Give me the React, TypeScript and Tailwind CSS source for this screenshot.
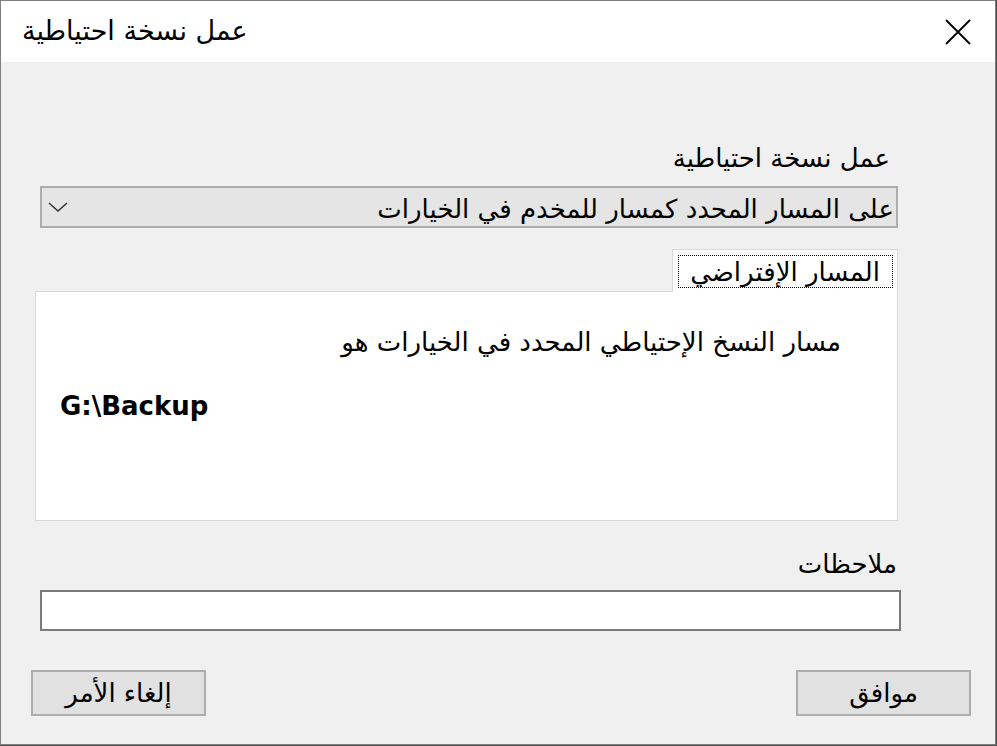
export default function App() {
  const font = { fontFamily: '"DejaVu Sans", "Liberation Sans", sans-serif' };

  return (
    <div className="w-[997px] h-[746px] bg-[#4a4a4a]" style={font}>
      <div className="w-[996px] h-[745px] border border-[#7f7f7f] bg-[#f0f0f0] flex flex-col">
        {/* Title bar */}
        <div className="h-[61px] bg-white flex items-center justify-between pl-[21px] pr-[24px]">
          <span dir="rtl" className="text-[27px] text-black leading-[30px] pb-[1px]">
            عمل نسخة احتياطية
          </span>
          <svg width="26" height="26" viewBox="0 0 26 26" className="text-black">
            <path d="M1 1 L25 25 M25 1 L1 25" stroke="currentColor" strokeWidth="1.8" fill="none" />
          </svg>
        </div>

        {/* Body */}
        <div dir="rtl" className="flex-1 flex flex-col">
          <div className="mt-[84px] mr-[105px] text-[26px] leading-[24px] text-black">
            عمل نسخة احتياطية
          </div>

          {/* Dropdown */}
          <div className="mt-[16px] mr-[97px] w-[858px] h-[42px] bg-[#e5e5e5] border-2 border-[#adadad] flex items-center justify-between pr-[2px] pl-[6px]">
            <span className="text-[26px] leading-[30px] pt-[4px] text-black">على المسار المحدد كمسار للمخدم في الخيارات</span>
            <svg width="20" height="10" viewBox="0 0 20 10">
              <path d="M1 1 L10 9 L19 1" stroke="#333" strokeWidth="1.5" fill="none" />
            </svg>
          </div>

          {/* Tabs */}
          <div className="mt-[21px] mr-[97px] w-[863px] flex flex-col">
            <div className="w-[226px] h-[43px] bg-white border border-b-0 border-[#d9d9d9] -mb-[1px] relative z-10 flex items-start justify-center pt-[5px]">
              <div className="w-[215px] h-[33px] border border-dotted border-black flex items-center justify-center">
                <span className="text-[26px] leading-[30px] text-black">المسار الإفتراضي</span>
              </div>
            </div>
            <div className="h-[230px] bg-white border border-[#d9d9d9] flex flex-col">
              <div className="mt-[36px] mr-[56px] text-[26px] leading-[28px] text-black">
                مسار النسخ الإحتياطي المحدد في الخيارات هو
              </div>
              <div dir="ltr" className="mt-[35px] ml-[24px] text-[26px] font-bold leading-[30px] text-black">
                G:\Backup
              </div>
            </div>
          </div>

          {/* Notes */}
          <div className="mt-[31px] mr-[98px] text-[26px] leading-[24px] text-black">ملاحظات</div>
          <div className="mt-[14px] mr-[94px] w-[861px] h-[41px] bg-white border-2 border-[#7a7a7a]" />

          {/* Buttons */}
          <div className="mt-[39px] flex justify-between pr-[24px] pl-[30px]">
            <button className="w-[175px] h-[46px] bg-[#e1e1e1] border-2 border-[#adadad] text-[26px] leading-[30px] text-black">
              موافق
            </button>
            <button className="w-[175px] h-[46px] bg-[#e1e1e1] border-2 border-[#adadad] text-[26px] leading-[30px] text-black">
              إلغاء الأمر
            </button>
          </div>
        </div>
      </div>
    </div>
  );
}
